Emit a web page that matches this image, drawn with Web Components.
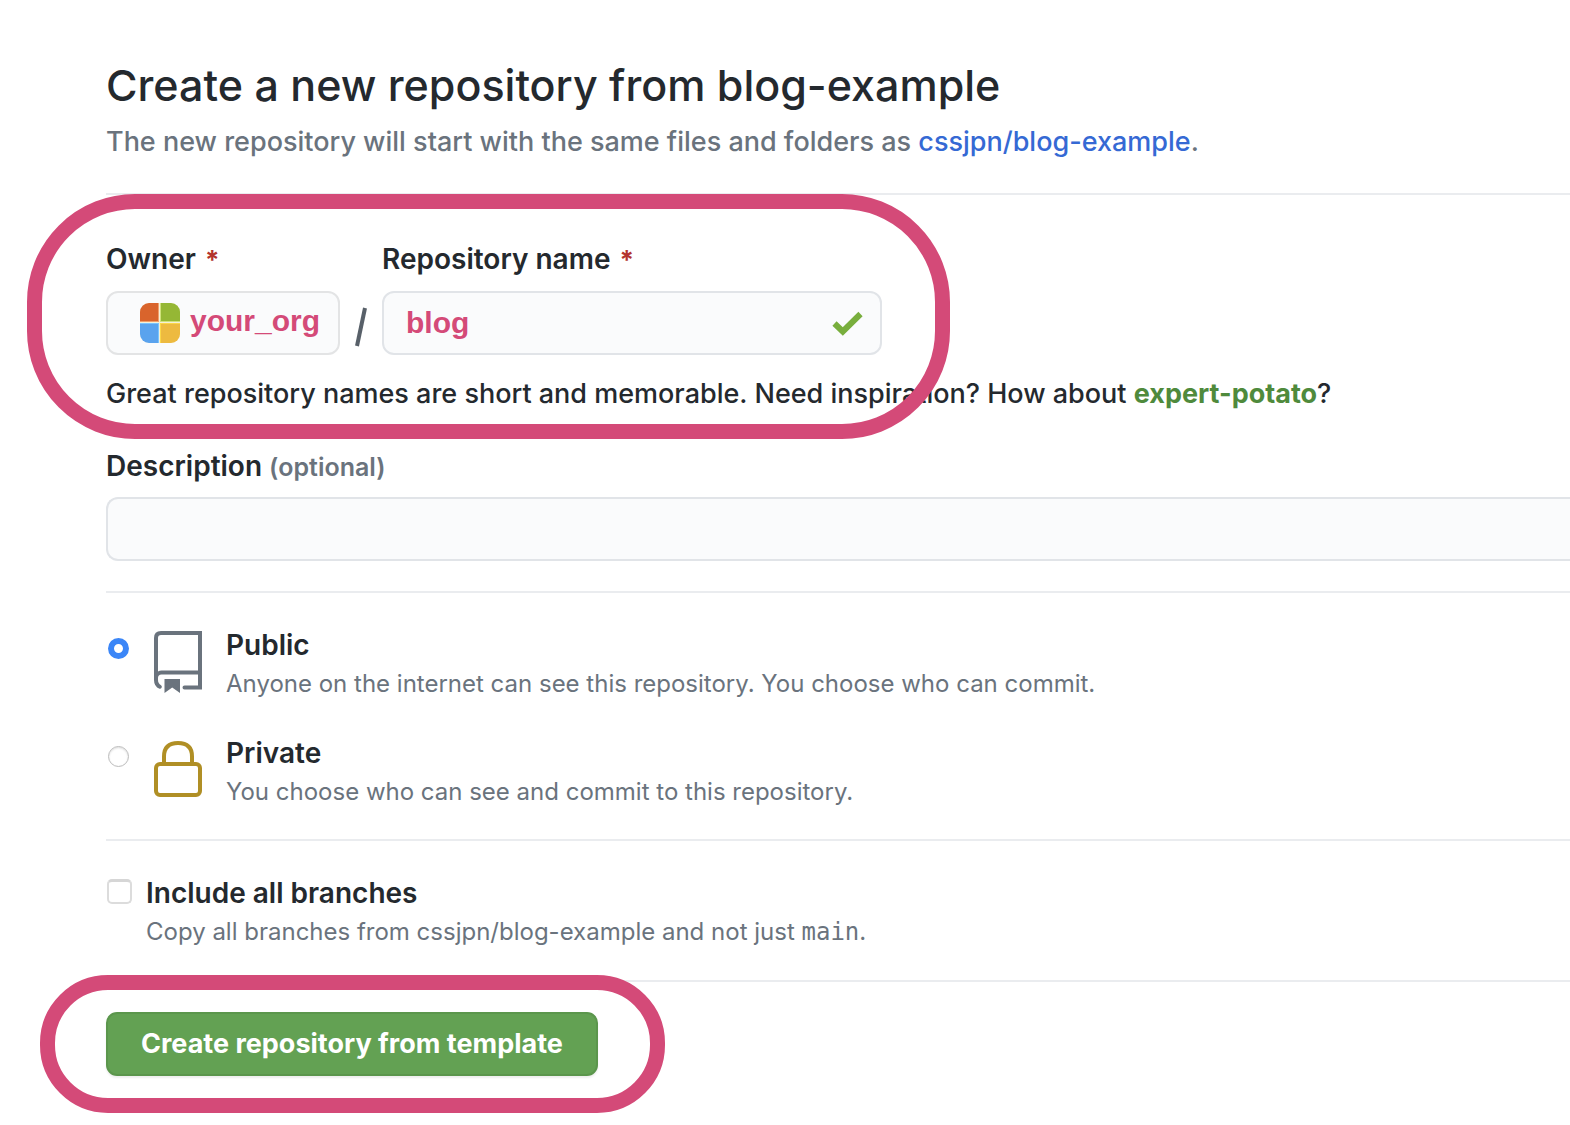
<!DOCTYPE html>
<html lang="en">
<head>
<meta charset="utf-8">
<title>Create a new repository</title>
<style>
  body {
    margin: 0;
    background: #fff;
    color: #24292e;
    font: 500 27px/42px Inter, "Liberation Sans", sans-serif;
    overflow-x: hidden;
    --muted: #6a737d;
    --line: #eaecef;
    --field: #fafbfc;
    --field-line: #e1e4e8;
    --mark: #d44a78;
    --label: 28px;
    --small: 24px;
    --control: 64px;
  }
</style>
</head>
<body>
<new-repository-page></new-repository-page>
<script>
const define = (name, html) => {
  const template = document.createElement('template');
  template.innerHTML = html;
  customElements.define(name, class extends HTMLElement {
    constructor() {
      super();
      this.attachShadow({ mode: 'open' }).append(template.content.cloneNode(true));
    }
  });
};

define('highlight-ring', `
  <style>
    :host { display: block; position: relative; width: fit-content; }
    .ring { position: absolute; box-sizing: border-box; inset: var(--ring-inset); width: var(--ring-width, auto);
      border: 15px solid var(--mark); border-radius: var(--ring-radius); pointer-events: none; }
  </style>
  <slot></slot><div class="ring"></div>`);

define('page-heading', `
  <style>
    :host { display: flex; flex-direction: column; gap: 6px; }
    h1 { margin: 0; font-size: 43px; line-height: 60px; font-weight: 500; }
    p { margin: 0; color: var(--muted); }
    a { color: #3569d4; text-decoration: none; }
  </style>
  <h1>Create a new repository from blog-example</h1>
  <p>The new repository will start with the same files and folders as <a href="#template">cssjpn/blog-example</a>.</p>`);

define('section-rule', `
  <style>
    :host { display: block; }
    hr { margin: 0; border: 0; height: 2px; background: var(--line); }
  </style><hr>`);

define('owner-picker', `
  <style>
    :host { display: flex; flex-direction: column; gap: 10px; }
    label { font-size: var(--label); font-weight: 600; }
    .required { color: #b3342d; margin-left: 2px; font-size: 26px; font-weight: 700; }
    button { box-sizing: border-box; height: var(--control); display: flex; align-items: center; gap: 10px;
      padding: 0 18px 0 32px; border: 2px solid #e3e4e5; border-radius: 12px; background: var(--field);
      color: var(--mark); font: bold 30px/42px "Liberation Sans", sans-serif; }
    button span { padding-bottom: 4px; }
    svg { width: 40px; height: 40px; display: block; }
  </style>
  <label for="owner">Owner <span class="required">*</span></label>
  <button id="owner" type="button">
    <svg viewBox="0 0 40 40" aria-hidden="true">
      <defs><clipPath id="c"><rect width="40" height="40" rx="9"/></clipPath></defs>
      <g clip-path="url(#c)">
        <rect width="40" height="40" fill="#f5f0d8"/>
        <rect width="18" height="18" fill="#d9642c"/><rect x="21" width="19" height="18" fill="#95b735"/>
        <rect y="21" width="18" height="19" fill="#5aa3ee"/><rect x="21" y="21" width="19" height="19" fill="#edba40"/>
        <path d="M18 0h1v19h-19v-1h18z" fill="#f0a06c"/><path d="M20 0h1v18h19v1h-20z" fill="#cfe27a"/>
        <path d="M0 20h19v20h-1v-19h-18z" fill="#79c5ff"/><path d="M20 20h20v1h-19v19h-1z" fill="#fbd748"/>
      </g>
    </svg>
    <span>your_org</span>
  </button>`);

define('repository-name', `
  <style>
    :host { display: flex; flex-direction: column; gap: 10px; }
    label { font-size: var(--label); font-weight: 600; }
    .required { color: #b3342d; margin-left: 2px; font-size: 26px; font-weight: 700; }
    .field { box-sizing: border-box; width: 500px; height: var(--control); display: flex; align-items: center;
      padding: 0 17px 0 22px; border: 2px solid var(--field-line); border-radius: 12px; background: var(--field); }
    input { flex: 1; min-width: 0; padding: 0; border: 0; outline: 0; background: none;
      color: var(--mark); font: bold 30px/42px "Liberation Sans", sans-serif; }
    svg { width: 31px; height: 25px; flex: none; }
  </style>
  <label for="name">Repository name <span class="required">*</span></label>
  <div class="field">
    <input id="name" type="text" value="blog">
    <svg viewBox="0 0 31 25" aria-hidden="true"><path d="M2.500 12.500 10.800 20.500 28.500 3" fill="none" stroke="#78ae3d" stroke-width="6"/></svg>
  </div>`);

define('repository-identity', `
  <style>
    :host { display: flex; flex-direction: column; gap: 18px; }
    .row { display: flex; align-items: flex-end; gap: 15px; }
    .slash { height: var(--control); display: flex; align-items: center; color: #586069; }
    .slash svg { width: 12px; height: 40px; margin-top: 8px; }
    p { margin: 0; white-space: nowrap; }
    strong { color: #4f8a3c; font-weight: 700; }
  </style>
  <div class="row">
    <owner-picker></owner-picker>
    <span class="slash"><svg viewBox="0 0 12 40" role="img" aria-label="slash"><path d="M10 1 2 39" stroke="currentColor" stroke-width="4"/></svg></span>
    <repository-name></repository-name>
  </div>
  <p>Great repository names are short and memorable. Need inspiration? How about <strong>expert-potato</strong>?</p>`);

define('description-field', `
  <style>
    :host { display: flex; flex-direction: column; gap: 9px; }
    label { font-size: var(--label); font-weight: 600; }
    .note { color: var(--muted); font-size: 25px; }
    input { box-sizing: border-box; width: 100%; height: var(--control); border: 2px solid var(--field-line);
      border-right: 0; border-radius: 12px 0 0 12px; background: var(--field); padding: 0 22px; font: inherit; }
  </style>
  <label for="description">Description <span class="note">(optional)</span></label>
  <input id="description" type="text">`);

define('visibility-options', `
  <style>
    :host { display: block; padding-top: 1px; }
    fieldset { margin: 0; padding: 0; border: 0; display: flex; flex-direction: column; gap: 31px; }
    .option { display: flex; align-items: flex-start; }
    input { appearance: none; box-sizing: border-box; flex: none; width: 21px; height: 21px; margin: 14px 25px 0 2px;
      border: 1px solid #bcbcbc; border-radius: 50%; background: #fff; box-shadow: inset 0 1px 2px #ddd; }
    input:checked { border: 6px solid #3b86f7; box-shadow: none; }
    svg { flex: none; width: 48px; height: 64px; margin: 6px 24px 0 0; }
    .book { fill: #6a737d; }
    .lock { fill: none; stroke: #b08f25; stroke-width: 4; }
    label { display: block; font-size: var(--label); font-weight: 600; }
    p { margin: 0; color: var(--muted); font-size: var(--small); line-height: 35px; font-weight: 400; }
  </style>
  <fieldset>
    <div class="option">
      <input type="radio" id="public" name="visibility" checked>
      <svg class="book" viewBox="0 0 48 64" aria-hidden="true"><path fill-rule="evenodd" d="M7 1H48V59.500H30.500A2 2 0 0 1 30.500 55.500H44V44.500H7.500Q4 44.500 4 48V50Q4 53.500 7 55.200A2 2 0 0 1 5.500 58.800Q0 56.500 0 50V8Q0 1 7 1ZM7 5Q4 5 4 8V41.500Q5.500 40.500 7.500 40.500H44V5Z"/><path d="M10.500 49H26V63L18.200 57.500 10.500 63Z"/></svg>
      <div><label for="public">Public</label><p>Anyone on the internet can see this repository. You choose who can commit.</p></div>
    </div>
    <div class="option">
      <input type="radio" id="private" name="visibility">
      <svg class="lock" viewBox="0 0 48 64" aria-hidden="true"><path d="M10 25V18.500Q10 5 24 5T38 18.500V25"/><rect x="2" y="26" width="44" height="31" rx="4"/></svg>
      <div><label for="private">Private</label><p>You choose who can see and commit to this repository.</p></div>
    </div>
  </fieldset>`);

define('branches-option', `
  <style>
    :host { display: flex; align-items: flex-start; gap: 14px; padding-top: 1px; }
    input { appearance: none; box-sizing: border-box; flex: none; width: 25px; height: 25px; margin: 7px 0 0 1px;
      border: 2px solid #dcdcdc; border-top: 3px solid #d6d6d6; border-radius: 5px; background: #fff; }
    input:checked { background: #3b86f7; }
    label { display: block; font-size: var(--label); font-weight: 600; }
    p { margin: 0; color: var(--muted); font-size: var(--small); line-height: 35px; font-weight: 400; }
    code { font: 24px/35px "DejaVu Sans Mono", monospace; }
  </style>
  <input type="checkbox" id="branches">
  <div><label for="branches">Include all branches</label><p>Copy all branches from cssjpn/blog-example and not just <code>main</code>.</p></div>`);

define('submit-button', `
  <style>
    :host { display: block; }
    button { box-sizing: border-box; height: var(--control); padding: 0 33px; border: 2px solid #5b964c;
      border-radius: 11px; background: #63a153; color: #fff; font: inherit; font-weight: 700; display: block;
      box-shadow: 0 2px 2px #1b1f2312; }
  </style>
  <button type="submit"><slot></slot></button>`);

define('new-repository-page', `
  <style>
    :host { display: block; }
    main { display: flex; flex-direction: column; gap: 30px; padding: 55px 0 50px 106px; }
    .identity { --ring-inset: -44px auto -24px -79px; --ring-width: 923px; --ring-radius: 108px; margin-top: 13px; }
    .submit { --ring-inset: -37px -67px -37px -66px; --ring-radius: 68px; }
  </style>
  <main>
    <page-heading></page-heading>
    <section-rule></section-rule>
    <highlight-ring class="identity"><repository-identity></repository-identity></highlight-ring>
    <description-field></description-field>
    <section-rule></section-rule>
    <visibility-options></visibility-options>
    <section-rule></section-rule>
    <branches-option></branches-option>
    <section-rule></section-rule>
    <highlight-ring class="submit"><submit-button>Create repository from template</submit-button></highlight-ring>
  </main>`);
</script>
</body>
</html>
